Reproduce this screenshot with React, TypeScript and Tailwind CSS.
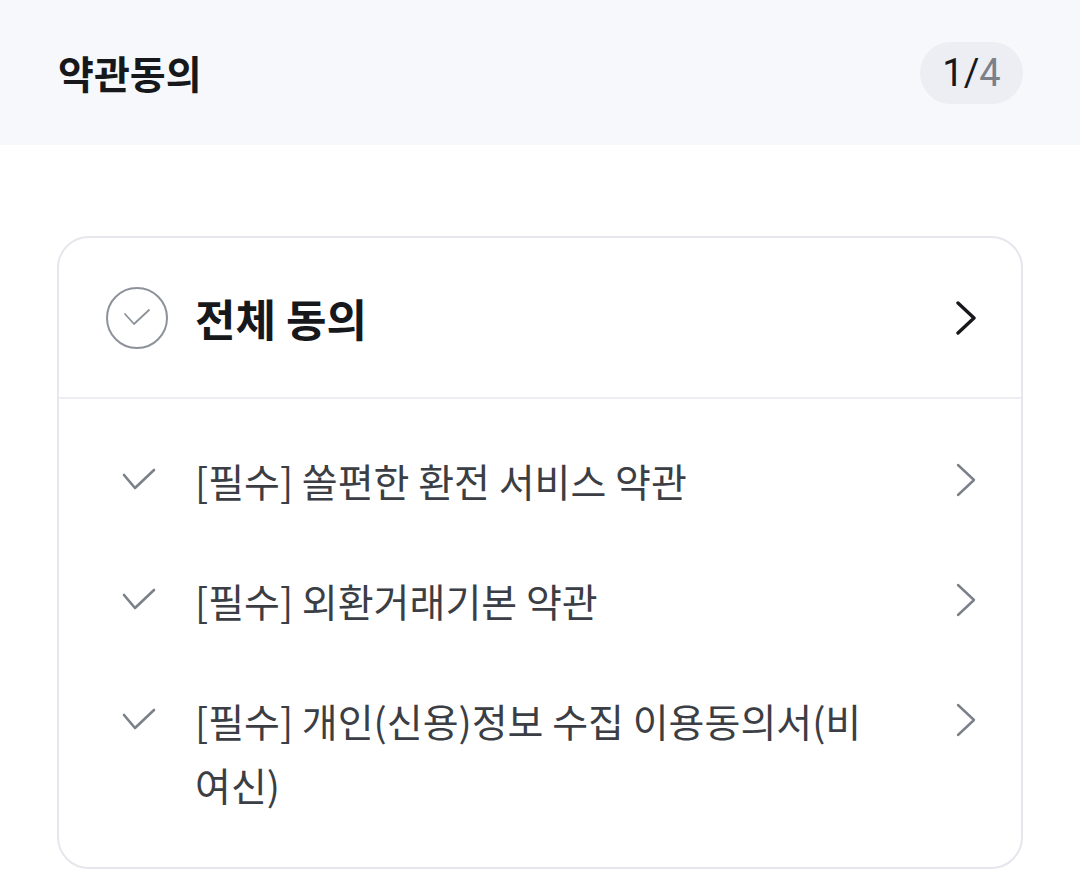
import React from "react";

const font = { fontFamily: '"Noto Sans CJK KR", "Noto Sans", Roboto, sans-serif' };

function Chevron({ className }: { className: string }) {
  return (
    <svg viewBox="0 0 22 34" className={className} fill="none" stroke="currentColor" strokeLinecap="round" strokeLinejoin="round">
      <path d="M3 2 L19 17 L3 32" />
    </svg>
  );
}

function ItemCheck({ className }: { className: string }) {
  return (
    <svg viewBox="0 0 36 26" className={className} fill="none" stroke="currentColor" strokeLinecap="round" strokeLinejoin="round">
      <path d="M3 8 L14 21 L33 3" />
    </svg>
  );
}

const items = [
  "[필수] 쏠편한 환전 서비스 약관",
  "[필수] 외환거래기본 약관",
  "[필수] 개인(신용)정보 수집 이용동의서(비여신)",
];

export default function App() {
  return (
    <div className="w-[1080px] h-[893px] bg-white overflow-hidden" style={font}>
      <div className="h-[145px] bg-[#f7f8fb] flex items-center justify-between pl-[58px] pr-[57px]">
        <h1 className="text-[39px] font-semibold text-[#16181b] leading-none">약관동의</h1>
        <div
          className="w-[103px] h-[62px] rounded-full bg-[#eceef3] flex items-center justify-center text-[38px] leading-none"
          style={{ fontFamily: 'Roboto, "Noto Sans", sans-serif' }}
        >
          <span className="text-[#16181b]">1</span>
          <span className="text-[#16181b]">/</span>
          <span className="text-[#7b8089]">4</span>
        </div>
      </div>
      <div className="px-[57px] pt-[91px]">
        <div className="border-2 border-[#e5e7ec] rounded-[32px]">
          <div className="h-[161px] flex items-center pl-[47px] pr-[44px] border-b-2 border-[#eceef1]">
            <div className="w-[62px] h-[62px] rounded-full border-[2.5px] border-[#8d929a] flex items-center justify-center text-[#8d929a]">
              <svg viewBox="0 0 28 20" className="w-[28px] h-[20px]" fill="none" stroke="currentColor" strokeWidth={1.8} strokeLinecap="round" strokeLinejoin="round">
                <path d="M2 6 L11 16 L26 2" />
              </svg>
            </div>
            <span className="ml-[27px] flex-1 text-[44px] font-bold text-[#16181b] leading-none">전체 동의</span>
            <Chevron className="w-[22px] h-[34px] text-[#16181b] [stroke-width:3.4]" />
          </div>
          <div className="pt-[49px] pb-[51px]">
            {items.map((t, i) => (
              <div key={i} className="flex items-start pl-[62px] pr-[44px] mb-[56px] last:mb-0">
                <div className="h-[64px] flex items-center">
                  <ItemCheck className="w-[36px] h-[26px] text-[#7b8089] [stroke-width:2.6]" />
                </div>
                <div className="ml-[38px] flex-1 pr-[80px] text-[39px] leading-[64px] text-[#3b3e44]">{t}</div>
                <div className="h-[64px] flex items-center">
                  <Chevron className="w-[22px] h-[34px] text-[#7b8089] [stroke-width:2.4]" />
                </div>
              </div>
            ))}
          </div>
        </div>
      </div>
    </div>
  );
}
